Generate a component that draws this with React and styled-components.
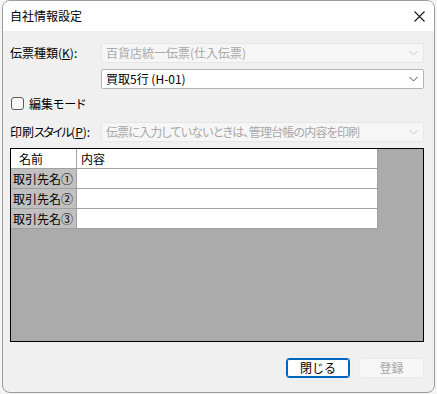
import React, { useState } from 'react';
import styled, { createGlobalStyle } from 'styled-components';

const GlobalStyle = createGlobalStyle`
  html, body {
    margin: 0;
    padding: 0;
    background: #f4f4f4;
  }
  body {
    font-family: "Noto Sans CJK JP", "Liberation Sans", sans-serif;
    font-size: 12px;
    font-feature-settings: "palt";
    color: #000;
  }
`;

const Screen = styled.div`
  width: 437px;
  height: 394px;
  display: flex;
  padding-left: 2px;
  box-sizing: border-box;
  overflow: hidden;
`;

const Window = styled.div`
  width: 433px;
  height: 393px;
  box-sizing: border-box;
  border: 1px solid #9c9c9c;
  border-radius: 8px;
  background: #f0f0f0;
  display: flex;
  flex-direction: column;
  overflow: hidden;
`;

const TitleBar = styled.div`
  height: 30px;
  flex: none;
  background: #ffffff;
  display: flex;
  align-items: center;
  justify-content: space-between;
  padding: 0 8px 0 7px;
`;

const Title = styled.span`
  font-size: 12px;
  line-height: 1;
  font-feature-settings: normal;
`;

const CloseButton = styled.button`
  border: none;
  background: transparent;
  padding: 0;
  width: 14px;
  height: 14px;
  display: flex;
  align-items: center;
  justify-content: center;
`;

const Body = styled.div`
  flex: 1;
  display: flex;
  flex-direction: column;
  padding: 12px 10px 0 7px;
`;

const Row = styled.div`
  display: flex;
  align-items: center;
  margin-bottom: ${p => p.$gap || 0}px;
`;

const Label = styled.span`
  width: 91px;
  flex: none;
  line-height: 1;
  white-space: nowrap;
`;

const Kana = styled.span`
  letter-spacing: ${p => p.$ls || -1}px;
`;

const Key = styled.span`
  text-decoration: underline;
  text-underline-offset: 1px;
`;

const Combo = styled.div`
  flex: none;
  width: 323px;
  height: 20px;
  box-sizing: border-box;
  border: 1px solid ${p => (p.$disabled ? '#e6e6e6' : '#b4b4b4')};
  border-radius: 2px;
  background: ${p => (p.$disabled ? '#f6f6f6' : '#ffffff')};
  color: ${p => (p.$disabled ? '#a8a8a8' : '#000')};
  display: flex;
  align-items: center;
  justify-content: space-between;
  padding: 0 5px 0 4px;
  margin-left: ${p => p.$indent || 0}px;
`;

const ComboText = styled.span`
  line-height: 1;
  white-space: nowrap;
  letter-spacing: ${p => p.$ls || 0}px;
`;

const CheckRow = styled.label`
  display: flex;
  align-items: center;
  gap: 5px;
  height: 14px;
  margin: 7px 0 12px 1px;
`;

const CheckBox = styled.span`
  width: 13px;
  height: 13px;
  box-sizing: border-box;
  border: 1px solid #5a5a5a;
  border-radius: 3px;
  background: #f7f7f7;
`;

const GridArea = styled.div`
  margin-top: 6px;
  width: 414px;
  height: 194px;
  box-sizing: border-box;
  border: 1px solid #000;
  background: #ababab;
  display: flex;
  flex-direction: column;
  align-items: flex-start;
`;

const Table = styled.div`
  display: grid;
  grid-template-columns: 66px 300px;
  border-right: 1px solid #a0a0a0;
`;

const Cell = styled.div`
  height: 20px;
  box-sizing: border-box;
  display: flex;
  align-items: center;
  padding-left: ${p => p.$pad || 3}px;
  background: ${p => (p.$head ? '#c0c0c0' : '#ffffff')};
  border-bottom: 1px solid #a0a0a0;
  border-right: ${p => (p.$first ? '1px solid #a0a0a0' : 'none')};
  line-height: 1;
  white-space: nowrap;
  font-feature-settings: normal;
`;

const Footer = styled.div`
  display: flex;
  justify-content: flex-end;
  gap: 9px;
  margin-top: 16px;
`;

const Button = styled.button`
  width: ${p => p.$w}px;
  height: 20px;
  box-sizing: border-box;
  border-radius: 3px;
  font-family: inherit;
  font-size: 12px;
  line-height: 1;
  padding: 0;
  border: 1px solid ${p => (p.$primary ? '#0067c0' : '#ececec')};
  box-shadow: ${p => (p.$primary ? 'inset 0 0 0 1px #0067c0' : 'none')};
  background: ${p => (p.$disabled ? '#f7f7f7' : '#ffffff')};
  color: ${p => (p.$disabled ? '#a6a6a6' : '#000')};
`;

function Chevron({ color }) {
  return (
    <svg width="9" height="6" viewBox="0 0 9 6">
      <path d="M0.5 1 L4.5 5 L8.5 1" fill="none" stroke={color} strokeWidth="1" />
    </svg>
  );
}

const rows = ['取引先名①', '取引先名②', '取引先名③'];

export default function App() {
  const [editMode] = useState(false);

  return (
    <>
      <GlobalStyle />
      <Screen>
        <Window>
          <TitleBar>
            <Title>自社情報設定</Title>
            <CloseButton aria-label="close">
              <svg width="11" height="11" viewBox="0 0 11 11">
                <path d="M0.5 0.5 L10.5 10.5 M10.5 0.5 L0.5 10.5" stroke="#1a1a1a" strokeWidth="1.1" />
              </svg>
            </CloseButton>
          </TitleBar>

          <Body>
            <Row $gap={6}>
              <Label>伝票種類(<Key>K</Key>):</Label>
              <Combo $disabled>
                <ComboText>百貨店統一伝票(仕入伝票)</ComboText>
                <Chevron color="#c8c8c8" />
              </Combo>
            </Row>
            <Row>
              <Combo $indent={91}>
                <ComboText>買取5行 (H-01)</ComboText>
                <Chevron color="#505050" />
              </Combo>
            </Row>

            <CheckRow>
              <CheckBox data-checked={editMode} />
              <span>編集モード</span>
            </CheckRow>

            <Row>
              <Label>印刷<Kana $ls={-1.5}>スタイル</Kana>(<Key>P</Key>):</Label>
              <Combo $disabled>
                <ComboText $ls={-0.8}>伝票に入力していないときは、管理台帳の内容を印刷</ComboText>
                <Chevron color="#c8c8c8" />
              </Combo>
            </Row>

            <GridArea>
              <Table>
                <Cell $first $pad={8}>名前</Cell>
                <Cell $pad={4}>内容</Cell>
                {rows.map(r => (
                  <React.Fragment key={r}>
                    <Cell $first $head $pad={2}>{r}</Cell>
                    <Cell />
                  </React.Fragment>
                ))}
              </Table>
            </GridArea>

            <Footer>
              <Button $primary $w={64}>閉じる</Button>
              <Button $disabled $w={65}>登録</Button>
            </Footer>
          </Body>
        </Window>
      </Screen>
    </>
  );
}
